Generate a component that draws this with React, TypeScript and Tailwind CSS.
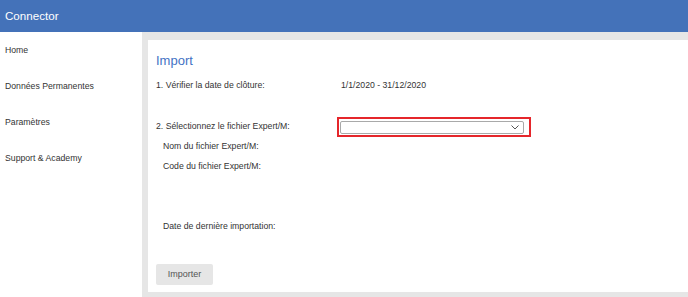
import React from "react";

export default function App() {
  const font = { fontFamily: '"Liberation Sans", Arial, sans-serif' };
  return (
    <div className="h-[297px] w-[688px] overflow-hidden flex flex-col bg-white" style={font}>
      <div className="h-[32px] shrink-0 bg-[#4472b9] flex items-center px-[5px] text-white text-[11.6px] leading-none">
        Connector
      </div>
      <div className="flex flex-1 min-h-0">
        <nav className="w-[142px] shrink-0 bg-white flex flex-col pt-[1px] text-[8.7px] text-[#333]">
          {["Home", "Données Permanentes", "Paramètres", "Support & Academy"].map((t) => (
            <div key={t} className="h-[36px] flex items-center px-[5px]">
              {t}
            </div>
          ))}
        </nav>
        <main className="flex-1 bg-[#e6e6e6] pl-[6px] pt-[8px] pb-[5px]">
          <div className="h-full bg-white pl-[8px] pt-[11px] flex flex-col text-[8.7px] text-[#333]">
            <h1 className="text-[13px] leading-[20px] text-[#4472c4]">Import</h1>
            <div className="mt-[5px] h-[20px] flex items-center">
              <span className="w-[185px]">1. Vérifier la date de clôture:</span>
              <span>1/1/2020 - 31/12/2020</span>
            </div>
            <div className="mt-[21px] h-[20px] flex items-center">
              <span className="w-[181px]">2. Sélectionnez le fichier Expert/M:</span>
              <div className="w-[194px] h-[20px] border-2 border-[#e5262b] pl-[1px] pr-[5px] pt-[1px] flex items-center">
                <div className="flex-1 h-[13px] border border-[#a9a9a9] rounded-[2px] bg-white flex items-center justify-end pr-[4px]">
                  <svg width="8" height="5" viewBox="0 0 8 5" fill="none">
                    <path d="M0.5 0.5 L4 4 L7.5 0.5" stroke="#555" strokeWidth="1" />
                  </svg>
                </div>
              </div>
            </div>
            <div className="h-[20px] flex items-center pl-[7px]">Nom du fichier Expert/M:</div>
            <div className="h-[20px] flex items-center pl-[7px]">Code du fichier Expert/M:</div>
            <div className="mt-[40px] h-[20px] flex items-center pl-[7px]">Date de dernière importation:</div>
            <div className="mt-[27px]">
              <button className="w-[57px] h-[21px] bg-[#e6e6e6] rounded-[2px] text-[9px] text-[#555] flex items-center justify-center">
                Importer
              </button>
            </div>
          </div>
        </main>
      </div>
    </div>
  );
}
